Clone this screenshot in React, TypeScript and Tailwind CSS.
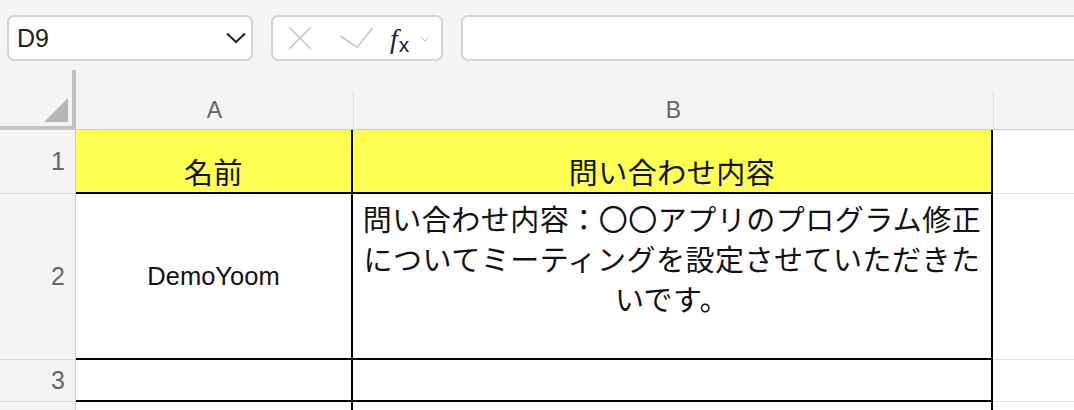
import React from "react";

const jp = "font-['Noto_Sans_CJK_JP',sans-serif] text-[29px] leading-[40px] tracking-[0.5px] text-[#111]";

function Toolbar() {
    return (
        <div className="flex h-[70px] items-start gap-[18px] pl-[7px] pt-[15px]">
            <div className="flex h-[46px] w-[246px] shrink-0 items-center justify-between rounded-[7px] border-2 border-[#d3d3d3] bg-white pl-[8px] pr-[5px]">
                <span className="text-[25px] leading-none text-[#222]">D9</span>
                <svg width="20" height="12" viewBox="0 0 20 12" fill="none">
                    <path d="M1 1.5 L10 10 L19 1.5" stroke="#222" strokeWidth="2" />
                </svg>
            </div>

            <div className="flex h-[46px] w-[172px] shrink-0 items-center rounded-[7px] border-2 border-[#d3d3d3] bg-white pl-[15px]">
                <svg width="24" height="24" viewBox="0 0 24 24" fill="none">
                    <path d="M1 1 L23 23 M23 1 L1 23" stroke="#c6c6c6" strokeWidth="1.6" />
                </svg>
                <svg className="ml-[28px]" width="33" height="22" viewBox="0 0 33 22" fill="none">
                    <path d="M0.5 9 L17 20.5 L32.5 1" stroke="#c6c6c6" strokeWidth="1.6" />
                </svg>
                <div className="ml-[17px] mt-[2px] flex items-end text-[#222]">
                    <span className="font-['Liberation_Serif',serif] text-[28px] italic leading-none">f</span>
                    <span className="ml-[1px] translate-y-[2px] text-[21px] leading-none">x</span>
                </div>
                <svg className="ml-[12px] mt-[2px]" width="8" height="5" viewBox="0 0 8 5" fill="none">
                    <path d="M0.5 0.5 L4 4 L7.5 0.5" stroke="#b8b8b8" strokeWidth="1" />
                </svg>
            </div>

            <div className="h-[46px] w-[640px] shrink-0 rounded-[7px] border-2 border-[#d3d3d3] bg-white" />
        </div>
    );
}

function HeaderRow() {
    return (
        <div className="flex h-[60px] border-b border-[#c8c8c8]">
            <div className="flex h-[59px] w-[76px] shrink-0 items-end justify-end border-r-4 border-b-[3px] border-[#c1c1c1] pb-[4px] pr-[4px]">
                <svg width="24" height="24" viewBox="0 0 24 24">
                    <path d="M24 0 L24 24 L0 24 Z" fill="#b7b7b7" />
                </svg>
            </div>
            <div className="flex w-[278px] shrink-0 items-end">
                <div className="flex h-[37px] w-full items-center justify-center border-r border-[#dcdcdc] text-[23px] text-[#666]">A</div>
            </div>
            <div className="flex w-[640px] shrink-0 items-end">
                <div className="flex h-[37px] w-full items-center justify-center border-r border-[#dcdcdc] text-[23px] text-[#666]">B</div>
            </div>
            <div className="flex-1" />
        </div>
    );
}

interface RowProps {
    num?: number;
    height: string;
    a?: React.ReactNode;
    b?: React.ReactNode;
    fill?: boolean;
    alignA?: string;
    alignB?: string;
}

function Row({ num, height, a, b, fill, alignA = "items-center", alignB = "items-center" }: RowProps) {
    const bg = fill ? "bg-[#ffff54]" : "bg-white";
    return (
        <div className={`flex ${height}`}>
            <div className="flex w-[76px] shrink-0 items-center justify-end border-r border-b border-r-[#c8c8c8] border-b-[#dcdcdc] pr-[10px] text-[25px] text-[#666]">
                {num}
            </div>
            <div className={`flex w-[277px] shrink-0 justify-center border-r-2 border-b-2 border-black ${bg} ${alignA}`}>{a}</div>
            <div className={`flex w-[640px] shrink-0 justify-center border-r-2 border-b-2 border-black ${bg} ${alignB}`}>{b}</div>
            <div className="flex-1 border-b border-[#e0e0e0] bg-white" />
        </div>
    );
}

export default function App() {
    return (
        <div className="h-[410px] w-[1074px] overflow-hidden bg-[#f4f4f4] font-['Liberation_Sans',sans-serif]">
            <Toolbar />
            <HeaderRow />
            <Row
                num={1}
                height="h-[64px]"
                fill
                alignA="items-end"
                alignB="items-end"
                a={<span className={`${jp} pb-[1px]`}>名前</span>}
                b={<span className={`${jp} pb-[1px]`}>問い合わせ内容</span>}
            />
            <Row
                num={2}
                height="h-[166px]"
                alignB="items-start"
                a={<span className="text-[25.5px] text-[#111]">DemoYoom</span>}
                b={
                    <div className={`${jp} flex flex-col items-center whitespace-nowrap pt-[4px]`}>
                        <span>問い合わせ内容：〇〇アプリのプログラム修正</span>
                        <span>についてミーティングを設定させていただきた</span>
                        <span>いです。</span>
                    </div>
                }
            />
            <Row num={3} height="h-[42px]" />
            <Row height="h-[42px]" />
        </div>
    );
}
